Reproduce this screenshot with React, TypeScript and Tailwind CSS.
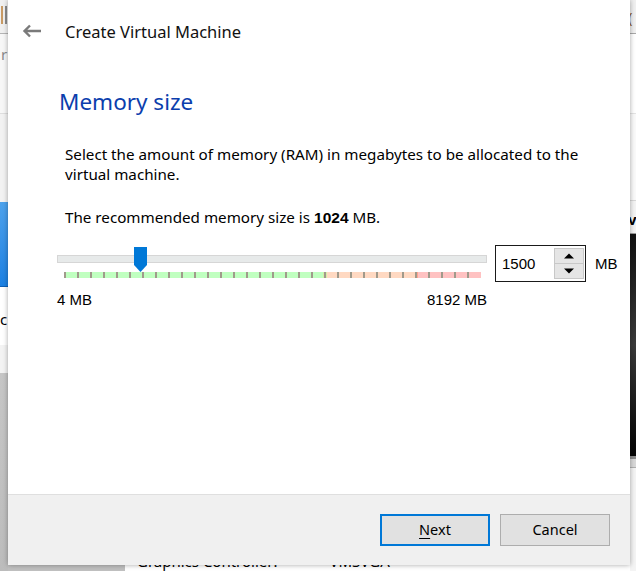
import React from "react";

const TICKS = Array.from({ length: 32 }, (_, i) => i);

function BackArrow() {
  return (
    <svg width="20" height="14" viewBox="0 0 20 14" fill="none">
      <path d="M19 7H2.5M8 1.5L2.5 7L8 12.5" stroke="#7a7a7a" strokeWidth="2.4" />
    </svg>
  );
}

function SliderThumb() {
  return (
    <svg width="13" height="25" viewBox="0 0 13 25">
      <path d="M0 0H13V18L6.5 25L0 18Z" fill="#0078d7" />
    </svg>
  );
}

function SpinArrow({ up }: { up?: boolean }) {
  return (
    <svg width="10" height="6" viewBox="0 0 10 6">
      <path d={up ? "M0 5.5L5 0.5L10 5.5Z" : "M0 0.5L5 5.5L10 0.5Z"} fill="#000" />
    </svg>
  );
}

/** Memory range band under the slider: green / orange / red with tick marks. */
function TickBand() {
  return (
    <div className="relative ml-[7px] w-[417px] h-[6px] flex">
      <div className="w-[259px] bg-[#c0ffc0]" />
      <div className="w-[4px] bg-[#d4f0a8]" />
      <div className="w-[88px] bg-[#ffd9c2]" />
      <div className="w-[3px] bg-[#ffa48c]" />
      <div className="flex-1 bg-[#ffc2c2]" />
      <div className="absolute inset-0 flex gap-[11px]">
        {TICKS.map((t) => (
          <div key={t} className="w-[2px] h-full bg-[#a09a8b]" />
        ))}
      </div>
    </div>
  );
}

export default function App() {
  const ui = "font-['Noto_Sans',sans-serif]";
  const dlg = "font-['Liberation_Sans',Arial,sans-serif]";

  return (
    <div className={`relative w-[636px] h-[571px] overflow-hidden bg-white ${ui}`}>
      {/* desktop / parent window behind the dialog */}
      <div className="flex h-full">
        <div className="w-[8px] flex flex-col">
          <div className="h-[33px] bg-[#f0f0f0] flex gap-[2px] pt-[6px] pl-[1px]">
            <div className="w-[2px] h-[18px] bg-[#c89a64]" />
            <div className="w-[2px] h-[18px] bg-[#8a8a8a]" />
          </div>
          <div className="h-px bg-[#b4b4b4]" />
          <div className="h-[79px] bg-[#f7f7f7] text-[15px] leading-[20px] text-[#8a8a8a] pt-[10px] pl-[1px]">r</div>
          <div className="h-px bg-[#dedede]" />
          <div className="h-[88px] bg-[#f2f2f2]" />
          <div className="h-[85px] bg-gradient-to-b from-[#4da2ec] to-[#1a80e2] border-b border-[#0d5fb4]" />
          <div className="h-[58px] bg-white text-[15px] leading-[20px] text-black pt-[22px]">c</div>
          <div className="h-[28px] bg-[#f3f3f3]" />
          <div className="flex-1 bg-gradient-to-b from-[#c6c6c6] to-[#bcbcbc]" />
        </div>
        <div className="flex-1 flex flex-col">
          <div className="h-[565px]" />
          <div className="flex-1 flex">
            <div className="w-[117px] bg-[#c0c0c0]" />
            <div className="flex-1 bg-white text-[15px] leading-[20px] text-black pl-[12px] flex gap-[52px]">
              <span className="mt-[1px]">Graphics Controller:</span>
              <span className="mt-[1px]">VMSVGA</span>
            </div>
          </div>
        </div>
        <div className="w-[6px] flex flex-col">
          <div className="h-[33px] bg-[#f0f0f0] pt-[9px] text-[15px] leading-[16px] text-[#8a5a2a] -ml-[2px]">(</div>
          <div className="h-px bg-[#a8a8a8]" />
          <div className="h-[79px] bg-white" />
          <div className="h-px bg-[#e4e4e4]" />
          <div className="h-[86px] bg-[#fafafa]" />
          <div className="h-px bg-[#d8d8d8]" />
          <div className="h-[32px] bg-[#f4f4f4] text-[15px] leading-[20px] font-bold text-black pt-[8px] -ml-[2px]">v</div>
          <div className="h-px bg-[#9a9a9a]" />
          <div className="h-[222px] bg-gradient-to-b from-[#111] via-[#3a3a3a] to-[#050505]" />
          <div className="h-[3px] bg-[#8c8c8c]" />
          <div className="h-[8px] bg-[#d8d8d8]" />
          <div className="h-px bg-[#b0b0b0]" />
          <div className="flex-1 bg-[#f4f4f4]" />
        </div>
      </div>

      {/* the wizard dialog */}
      <div className="absolute left-[8px] top-0 w-[622px] h-[565px] bg-white flex flex-col shadow-[0_0_5px_rgba(0,0,0,0.35)]">
        <div className="h-[64px] flex items-center">
          <div className="ml-[14px] mt-[-2px] flex">
            <BackArrow />
          </div>
          <span className="ml-[23px] text-[16.5px] leading-[20px] text-[#111]">Create Virtual Machine</span>
        </div>

        <div className="flex-1 flex flex-col">
          <h1 className="ml-[51px] mt-[23px] text-[22.5px] leading-[30px] text-[#0b3ead]">Memory size</h1>

          <p className="ml-[57px] mt-[27px] w-[540px] text-[15.2px] leading-[20px] text-black">
            Select the amount of memory (RAM) in megabytes to be allocated to the virtual machine.
          </p>

          <p className="ml-[57px] mt-[23px] text-[15.2px] leading-[20px] text-black">
            The recommended memory size is <b className={`${dlg} text-[15.5px]`}>1024</b> MB.
          </p>

          <div className="ml-[49px] mt-[17px] flex items-start">
            <div className="relative w-[430px] flex flex-col pt-[10px]">
              <div className="h-[8px] bg-[#e7eaea] border border-[#d6d6d6]" />
              <div className="mt-[9px]">
                <TickBand />
              </div>
              <div className={`mt-[12px] flex justify-between text-[15px] leading-[20px] text-black ${dlg}`}>
                <span>4 MB</span>
                <span>8192 MB</span>
              </div>
              <div className="absolute left-[77px] top-[2px] flex">
                <SliderThumb />
              </div>
            </div>

            <div className="ml-[8px] flex items-center">
              <div className="w-[91px] h-[37px] border border-[#1a1a1a] flex items-center">
                <span className={`ml-[6px] flex-1 text-[15px] leading-[20px] text-black ${dlg}`}>1500</span>
                <div className="mr-[1px] w-[30px] h-[31px] flex flex-col border border-[#c8c8c8] bg-[#e5e5e5]">
                  <div className="flex-1 flex items-center justify-center border-b border-[#c8c8c8]">
                    <SpinArrow up />
                  </div>
                  <div className="flex-1 flex items-center justify-center">
                    <SpinArrow />
                  </div>
                </div>
              </div>
              <span className={`ml-[9px] text-[15px] leading-[20px] text-black ${dlg}`}>MB</span>
            </div>
          </div>
        </div>

        <div className="h-[71px] bg-[#f0f0f0] border-t border-[#dfdfdf] flex items-center justify-end gap-[10px] pr-[20px]">
          <button
            type="button"
            className="w-[110px] h-[32px] bg-[#e1e1e1] border-2 border-[#0078d7] text-[14.5px] text-black"
          >
            <span className="underline underline-offset-[3px]">N</span>ext
          </button>
          <button
            type="button"
            className="w-[110px] h-[32px] bg-[#e1e1e1] border border-[#adadad] text-[14.5px] text-black"
          >
            Cancel
          </button>
        </div>
      </div>
    </div>
  );
}
